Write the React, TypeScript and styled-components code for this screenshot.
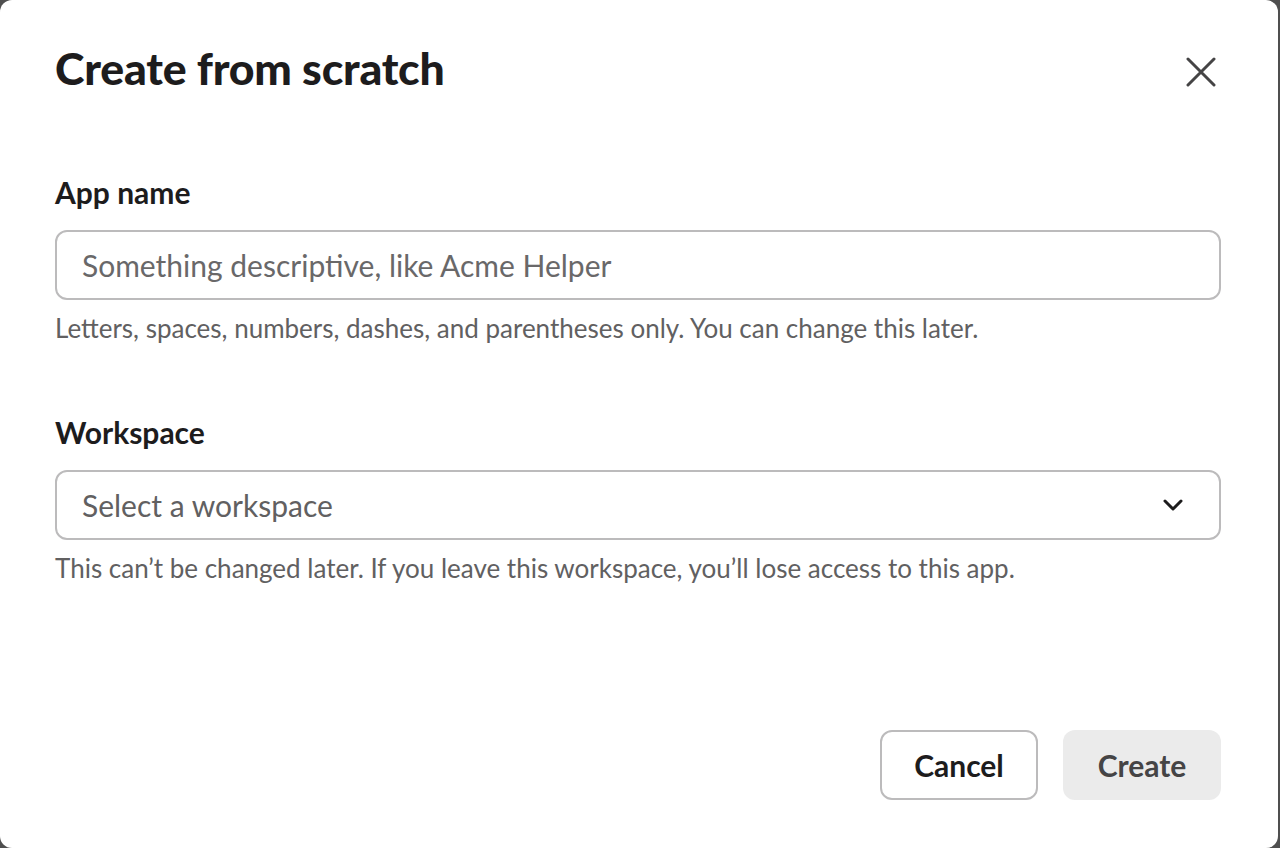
import React from 'react';
import styled, { createGlobalStyle } from 'styled-components';

const GlobalStyle = createGlobalStyle`
  html, body {
    margin: 0;
    padding: 0;
    background: #4f4f4f;
    font-family: Lato, "Noto Sans", sans-serif;
  }
`;

const Modal = styled.div`
  width: 1278px;
  height: 848px;
  box-sizing: border-box;
  background: #fff;
  border-radius: 12px;
  display: flex;
  flex-direction: column;
  padding: 42px 57px 48px 55px;
  color: #1d1c1d;
`;

const Header = styled.div`
  display: flex;
  justify-content: space-between;
  align-items: flex-start;
`;

const Title = styled.h1`
  margin: 0;
  font-size: 44.6px;
  line-height: 52px;
  font-weight: 900;
  letter-spacing: -0.2px;
`;

const CloseButton = styled.button`
  border: none;
  background: none;
  padding: 0;
  margin: 14px 4px 0 0;
  width: 32px;
  height: 32px;
  display: flex;
  align-items: center;
  justify-content: center;
  color: #454445;
  cursor: pointer;
`;

const Field = styled.div<{ $top: number }>`
  display: flex;
  flex-direction: column;
  margin-top: ${(p) => p.$top}px;
`;

const Label = styled.label`
  font-size: 30px;
  line-height: 36px;
  font-weight: 700;
  margin-bottom: 20px;
`;

const Box = styled.div`
  height: 70px;
  box-sizing: border-box;
  border: 2px solid #bcbbbc;
  border-radius: 12px;
  display: flex;
  align-items: center;
  justify-content: space-between;
  padding: 0 36px 0 25px;
  font-size: 30px;
  color: #616061;
`;

const Input = styled.input`
  border: none;
  outline: none;
  flex: 1;
  font: inherit;
  color: #1d1c1d;
  padding: 0;
  background: transparent;
  &::placeholder {
    color: #696869;
  }
`;

const Help = styled.div`
  font-size: 26px;
  line-height: 32px;
  color: #616061;
  margin-top: 12px;
`;

const Footer = styled.div`
  margin-top: auto;
  display: flex;
  justify-content: flex-end;
  gap: 25px;
`;

const Button = styled.button<{ $primary?: boolean }>`
  height: 70px;
  width: 158px;
  box-sizing: border-box;
  border-radius: 12px;
  font-family: inherit;
  font-size: 30px;
  font-weight: 700;
  border: ${(p) => (p.$primary ? 'none' : '2px solid #bcbbbc')};
  background: ${(p) => (p.$primary ? '#ebebeb' : '#fff')};
  color: ${(p) => (p.$primary ? '#454445' : '#1d1c1d')};
`;

export default function App() {
  return (
    <>
      <GlobalStyle />
      <Modal>
        <Header>
          <Title>Create from scratch</Title>
          <CloseButton aria-label="Close">
            <svg width="30" height="30" viewBox="0 0 30 30" fill="none" stroke="currentColor" strokeWidth="3" strokeLinecap="round">
              <path d="M2 2 L28 28 M28 2 L2 28" />
            </svg>
          </CloseButton>
        </Header>
        <Field $top={80}>
          <Label>App name</Label>
          <Box>
            <Input placeholder="Something descriptive, like Acme Helper" />
          </Box>
          <Help>Letters, spaces, numbers, dashes, and parentheses only. You can change this later.</Help>
        </Field>
        <Field $top={70}>
          <Label>Workspace</Label>
          <Box>
            <span>Select a workspace</span>
            <svg width="20" height="12" viewBox="0 0 20 12" fill="none" stroke="#1d1c1d" strokeWidth="3" strokeLinecap="round" strokeLinejoin="round">
              <path d="M2 2 L10 10 L18 2" />
            </svg>
          </Box>
          <Help>This can’t be changed later. If you leave this workspace, you’ll lose access to this app.</Help>
        </Field>
        <Footer>
          <Button>Cancel</Button>
          <Button $primary>Create</Button>
        </Footer>
      </Modal>
    </>
  );
}
